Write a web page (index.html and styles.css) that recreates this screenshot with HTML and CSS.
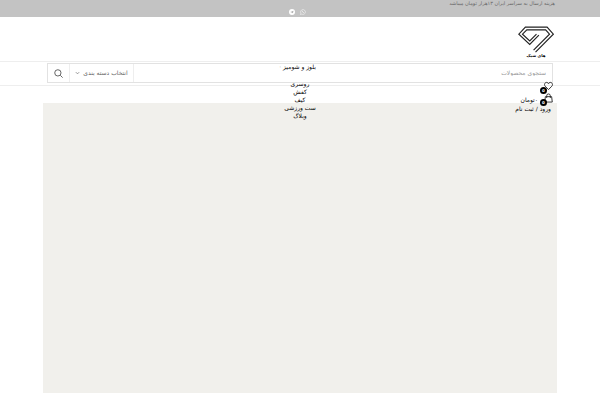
FILE: index.html
```html
<!DOCTYPE html>
<html lang="fa" dir="rtl">
<head>
<meta charset="utf-8">
<title>های شیک</title>
<link rel="stylesheet" href="styles.css">
</head>
<body>
<div class="topbar">
  <p class="notice">هزینه ارسال به سراسر ایران ۱۳هزار تومان میباشد</p>
  <div class="social">
    <a href="#" aria-label="WhatsApp"><svg viewBox="0 0 12 12"><path d="M1 11l.8-2.700a4.800 4.800 0 1 1 1.900 1.900z" fill="none" stroke="#fff"/><path d="M4.300 3.700c-.6 2 1.800 4.400 3.800 3.900l.3-.9-1.300-.6-.6.5-1.200-1.200.5-.7-.6-1.200z" fill="#fff"/></svg></a>
    <a href="#" aria-label="Telegram"><svg viewBox="0 0 12 12"><circle cx="6" cy="6" r="6" fill="#fff"/><path d="M2.600 5.900l6.300-2.500-1 5.200-2-1.400-1 1-.3-1.700 2.800-2.400-3.500 2.200z" fill="#aaa"/></svg></a>
  </div>
</div>
<header class="header">
  <div class="brand">
    <a href="#" class="logo" aria-label="های شیک">
      <svg viewBox="0 0 38 28" fill="none" stroke="#222" stroke-width="1.200"><path d="M22 9.500L12.500 19.200L1.200 8.500L8 1.200H30.500L37 8.500L18.500 27"/><path d="M19.500 8.500L12.500 15.500L5 8.500L9.500 4H29L33 8.500L16.500 25"/></svg>
      <span>های شیک</span>
    </a>
  </div>
  <div class="navrow">
    <form class="search">
      <input type="search" aria-label="جستجو" placeholder="ستجوی محصولات">
      <button type="button" class="category">انتخاب دسته بندی <svg viewBox="0 0 6 4"><path d="M1 1l2 2 2-2" fill="none" stroke="#777" stroke-width=".9"/></svg></button>
      <button type="submit" class="go" aria-label="جستجو"><svg viewBox="0 0 10 10" fill="none" stroke="#555"><circle cx="4.300" cy="4.300" r="3.500"/><path d="M7 7l2.600 2.600"/></svg></button>
    </form>
    <nav class="menu">
      <a href="#" class="parent">بلوز و شومیز</a>
      <a href="#">روسری</a>
      <a href="#">کفش</a>
      <a href="#">کیف</a>
      <a href="#">ست ورزشی</a>
      <a href="#">وبلاگ</a>
    </nav>
    <div class="tools">
      <a href="#" class="tool" aria-label="علاقه مندی"><svg viewBox="0 0 10 10" fill="none" stroke="#222"><path d="M5 9L1.300 5.200C-.4 3.200 1.100 1 2.900 1 4 1 4.700 1.700 5 2.400 5.300 1.700 6 1 7.100 1 8.900 1 10.400 3.200 8.700 5.200z"/></svg><b class="badge">0</b></a>
      <a href="#" class="tool"><svg viewBox="0 0 10 10" fill="none" stroke="#222"><path d="M1.500 3.500h7l.7 6H.8zM3 5V2.500a2 2 0 0 1 4 0V5"/></svg><b class="badge">0</b><span class="total">۰تومان</span></a>
      <a href="#" class="login">ورود / ثبت نام</a>
    </div>
  </div>
</header>
<main class="page"><div class="slider"></div></main>
</body>
</html>
```
FILE: styles.css
```css
* { box-sizing: border-box; }
body {
  margin: 0;
  background: #fff;
  color: #000;
  font: 6px/8px "DejaVu Sans", "Noto Sans", sans-serif;
}
a { color: inherit; text-decoration: none; }
svg { display: block; }
.topbar {
  height: 17px;
  padding: 0 45px;
  background: #c3c3c3;
  color: #666;
}
.notice { margin: 0; font-size: 5px; line-height: 6px; }
.social { display: flex; justify-content: center; padding-top: 3px; }
.social a { margin-inline-start: 5px; }
.social svg { width: 6px; height: 6px; }
.brand {
  display: flex;
  padding: 9px 45px 2px;
  border-bottom: 1px solid #eee;
}
.logo {
  display: flex;
  flex-direction: column;
  align-items: center;
  font-size: 4px;
  font-weight: bold;
  line-height: 6px;
}
.logo svg { width: 38px; height: 27px; }
.navrow {
  position: relative;
  height: 24px;
  padding: 1px 47px 0;
  border-bottom: 1px solid #eee;
}
.search {
  display: flex;
  height: 20px;
  border: 1px solid #e2e2e2;
}
.search input, .search button {
  min-width: 0;
  border: 0;
  background: none;
  font: inherit;
  color: #666;
}
.search input { flex: 1; padding: 0 6px; outline: 0; }
.search input::placeholder { color: #999; }
.search .category {
  display: flex;
  align-items: center;
  justify-content: center;
  gap: 3px;
  width: 65px;
  padding: 0;
  border-inline: 1px solid #eee;
}
.category svg { width: 5px; height: 4px; }
.search .go { width: 21px; padding: 0 6px; }
.go svg { width: 9px; height: 9px; }
.menu {
  position: absolute;
  top: 1px;
  inset-inline: 0;
  display: flex;
  flex-direction: column;
  align-items: center;
  pointer-events: none;
}
.menu a { pointer-events: auto; }
.menu .parent { margin-bottom: 9px; padding-inline-start: 5px; }
.menu .parent::after { content: "·"; padding-inline-start: 2px; color: #999; }
.tools {
  position: absolute;
  top: 19px;
  right: 47px;
  display: flex;
  flex-direction: column;
  gap: 2px;
}
.tool { position: relative; display: flex; height: 10px; }
.tool svg { width: 9px; height: 10px; }
.badge {
  position: absolute;
  right: 6px;
  top: 6px;
  width: 7px;
  border-radius: 50%;
  background: #000;
  color: #fff;
  font-size: 4px;
  line-height: 7px;
  text-align: center;
}
.total { padding: 3px 6px 0 0; }
.login { padding-right: 2px; }
.page { padding: 17px 43px 7px; }
.slider { height: calc(100vh - 110px); background: #f1f0ec; }
```
